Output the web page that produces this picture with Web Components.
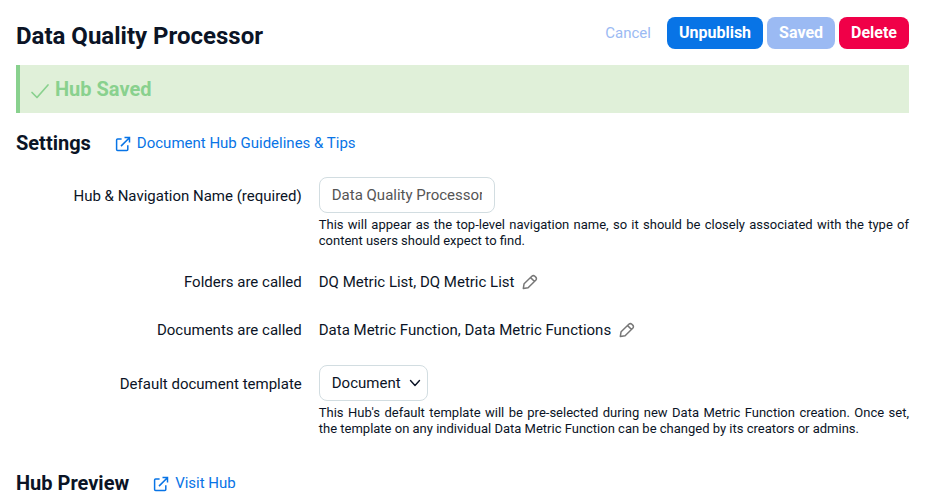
<!DOCTYPE html>
<html lang="en">
<head>
<meta charset="utf-8">
<meta name="viewport" content="width=device-width, initial-scale=1">
<title>Data Quality Processor</title>
<style>
  body { margin: 0; background: #fff; color: #0b1426; font: 15px/24px Roboto, "Liberation Sans", sans-serif; }
</style>
</head>
<body>
<hub-page></hub-page>

<template id="t-icon">
  <style>
    :host { display: inline-flex; flex: none; }
    svg { display: none; fill: none; stroke: currentColor; }
    :host([name="check"]) .check, :host([name="external"]) .external,
    :host([name="pencil"]) .pencil, :host([name="chevron"]) .chevron { display: block; }
  </style>
  <svg class="check" width="20" height="18" viewBox="0 0 20 18" stroke-width="1.7" stroke-linecap="round" stroke-linejoin="round" aria-hidden="true"><path d="M2 10.5 7 15.5 18 3"/></svg>
  <svg class="external" width="16" height="16" viewBox="0 0 16 16" stroke-width="1.5" aria-hidden="true"><path d="M6.6 2.9H2.6a1 1 0 0 0-1 1v9.6a1 1 0 0 0 1 1h9.2a1 1 0 0 0 1-1V9.3M9.5 1.6h5v5M14.4 1.7 6 10.1"/></svg>
  <svg class="pencil" width="16" height="16" viewBox="0 0 16 16" stroke-width="1.5" stroke-linejoin="round" aria-hidden="true"><path d="M1.3 14.5l.8-4.8 7.7-7.4a2.3 2.3 0 0 1 3.1 0l.8.8a2.3 2.3 0 0 1 0 3.1l-7.6 7.5zM8.6 3.6 12.3 7.3"/></svg>
  <svg class="chevron" width="12" height="8" viewBox="0 0 12 8" stroke-width="1.4" stroke-linecap="round" stroke-linejoin="round" aria-hidden="true"><path d="M1.5 1.5 6 6.5l4.5-5"/></svg>
</template>

<template id="t-button">
  <style>
    :host { display: inline-flex; }
    button { font: bold 16px/24px Roboto, "Liberation Sans", sans-serif; height: 32px; padding: 4px 12px; border: 0; border-radius: 8px; background: #0874e6; color: #fff; cursor: pointer; }
    :host([kind="muted"]) button { background: #9bbaf3; }
    :host([kind="danger"]) button { background: #f00048; }
    :host([kind="plain"]) button { background: none; color: #9bbaf3; font-size: 15px; font-weight: 400; }
  </style>
  <button type="button"><slot></slot></button>
</template>

<template id="t-banner">
  <style>
    :host { display: flex; align-items: center; gap: 5px; box-sizing: border-box; padding: 12px 10px; border-left: 4px solid #89d18e; background: #e0f0d9; color: #89d18e; font-size: 20px; font-weight: 700; line-height: 24px; }
    hub-icon { padding-top: 3px; }
  </style>
  <hub-icon name="check"></hub-icon><span role="status"><slot></slot></span>
</template>

<template id="t-section">
  <style>
    :host { display: flex; align-items: center; gap: 24px; }
    h2 { margin: 0; font-size: 20px; line-height: 28px; font-weight: 700; }
    a { display: inline-flex; align-items: center; gap: 6px; color: #0874e6; text-decoration: none; }
    hub-icon { padding-top: 2px; }
  </style>
  <h2><slot></slot></h2>
  <a href="#"><hub-icon name="external"></hub-icon><span><slot name="link"></slot></span></a>
</template>

<template id="t-value">
  <style>
    :host { display: flex; align-items: center; gap: 8px; padding-bottom: 2px; line-height: 26px; }
    button { display: inline-flex; padding: 0; border: 0; background: none; color: #777; cursor: pointer; }
  </style>
  <span><slot></slot></span><button type="button" aria-label="Edit"><hub-icon name="pencil"></hub-icon></button>
</template>

<template id="t-form">
  <style>
    :host { display: grid; grid-template-columns: 32% minmax(0, 1fr); column-gap: 17px; row-gap: 20px; }
    .name { text-align: right; line-height: 26px; }
    label.name { line-height: 38px; }
    input, select { box-sizing: border-box; height: 36px; padding: 0 12px; border: 1px solid #d2dde1; border-radius: 8px; background: #fff; font: inherit; }
    input { display: block; width: 176px; color: #555; }
    select { appearance: none; color: #0b1426; padding-right: 26px; }
    .select { display: inline-grid; align-items: center; vertical-align: top; }
    .select > * { grid-area: 1 / 1; }
    .select hub-icon { justify-self: end; padding-right: 7px; pointer-events: none; }
    p { margin: 4px 0 0; font-size: 13px; line-height: 16px; text-align: justify; }
  </style>
  <label class="name" for="hub-name">Hub &amp; Navigation Name (required)</label>
  <div>
    <input id="hub-name" type="text" value="Data Quality Processor" required aria-describedby="name-help">
    <p id="name-help">This will appear as the top-level navigation name, so it should be closely associated with the type of content users should expect to find.</p>
  </div>
  <div class="name">Folders are called</div>
  <hub-value>DQ Metric List, DQ Metric List</hub-value>
  <div class="name">Documents are called</div>
  <hub-value>Data Metric Function, Data Metric Functions</hub-value>
  <label class="name" for="hub-template">Default document template</label>
  <div>
    <span class="select"><select id="hub-template" aria-describedby="template-help"><option>Document</option></select><hub-icon name="chevron"></hub-icon></span>
    <p id="template-help">This Hub's default template will be pre-selected during new Data Metric Function creation. Once set, the template on any individual Data Metric Function can be changed by its creators or admins.</p>
  </div>
</template>

<template id="t-page">
  <style>
    :host { display: block; padding: 17px 41px 6px 16px; }
    header { display: flex; align-items: flex-start; justify-content: space-between; }
    h1 { margin: 0; font-size: 24px; line-height: 38px; font-weight: 700; }
    nav { display: flex; gap: 4px; }
    hub-banner { margin: 10px 0 16px; }
    hub-form { margin: 20px 0 32px; }
  </style>
  <header>
    <h1>Data Quality Processor</h1>
    <nav aria-label="Hub actions">
      <hub-button kind="plain">Cancel</hub-button>
      <hub-button>Unpublish</hub-button>
      <hub-button kind="muted">Saved</hub-button>
      <hub-button kind="danger">Delete</hub-button>
    </nav>
  </header>
  <hub-banner>Hub Saved</hub-banner>
  <hub-section>Settings<span slot="link">Document Hub Guidelines &amp; Tips</span></hub-section>
  <hub-form></hub-form>
  <hub-section>Hub Preview<span slot="link">Visit Hub</span></hub-section>
</template>

<script>
  for (const name of ["icon", "button", "banner", "section", "value", "form", "page"]) {
    customElements.define("hub-" + name, class extends HTMLElement {
      constructor() {
        super();
        this.attachShadow({ mode: "open" })
          .append(document.getElementById("t-" + name).content.cloneNode(true));
      }
    });
  }
</script>
</body>
</html>
